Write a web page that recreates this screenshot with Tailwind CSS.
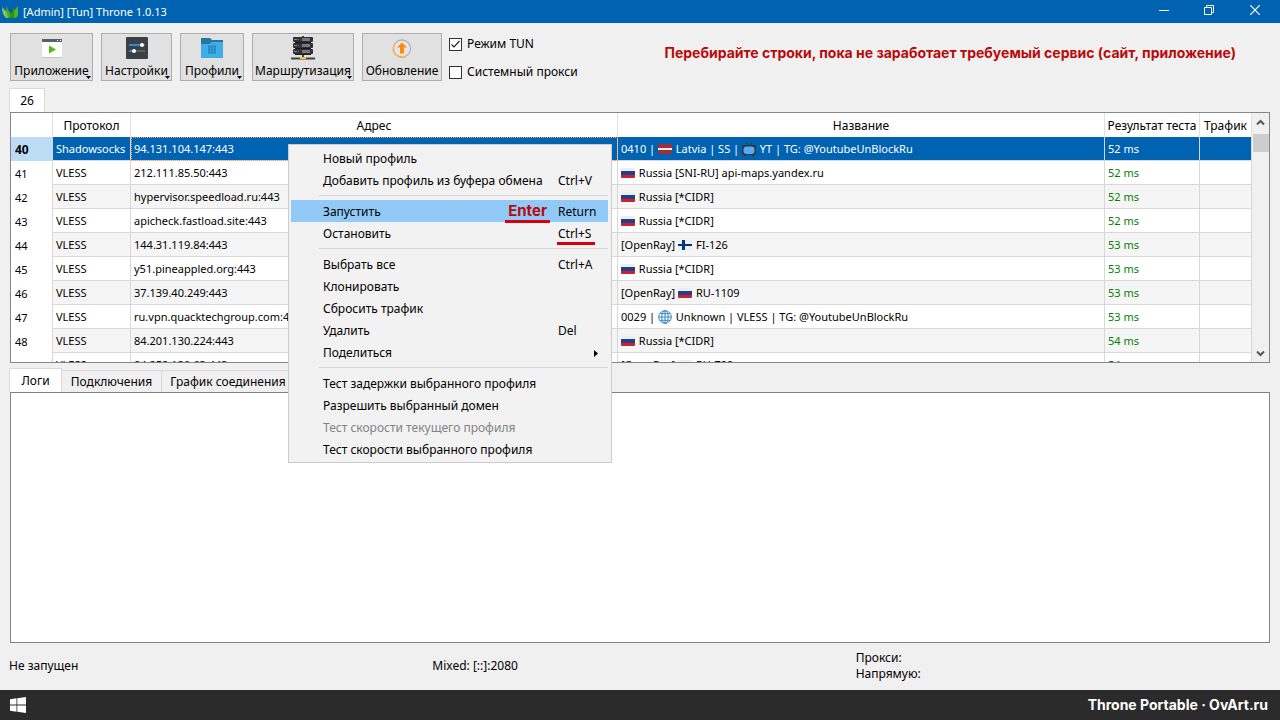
<!DOCTYPE html>
<html lang="ru">
<head>
  <meta charset="UTF-8" />
  <title>[Admin] [Tun] Throne 1.0.13</title>
  <script src="https://cdn.jsdelivr.net/npm/@tailwindcss/browser@4"></script>
</head>
<body class="relative flex h-screen flex-col overflow-hidden bg-[#f0f0f0] font-['Noto_Sans','Open_Sans',sans-serif] text-[12px] leading-4 text-black">

  <!-- Shared icons -->
  <svg class="hidden">
    <symbol id="ru" viewBox="0 0 14 10"><rect width="14" height="10" rx="1" fill="#eee" /><path d="M0 3h14v4H0z" fill="#22408c" /><path d="M0 7h14v2q0 1-1 1H1q-1 0-1-1z" fill="#ce2028" /></symbol>
    <symbol id="lv" viewBox="0 0 14 10"><rect width="14" height="10" rx="1" fill="#a02f3a" /><path d="M0 4h14v2H0z" fill="#eee" /></symbol>
    <symbol id="fi" viewBox="0 0 14 10"><rect width="14" height="10" rx="1" fill="#eee" /><path d="M0 4h4V0h3v4h7v2H7v4H4V6H0z" fill="#003580" /></symbol>
    <symbol id="tv" viewBox="0 0 14 14"><path d="M4 .5l3 3.500 3-3.500" fill="none" stroke="#31373d" /><rect y="3" width="14" height="10" rx="2" fill="#31373d" /><path d="M2 12h2v2H2zM10 12h2v2h-2z" fill="#31373d" /><rect x="1.500" y="4.500" width="11" height="7.500" rx="3" fill="#55acee" /></symbol>
    <symbol id="globe" viewBox="0 0 14 14"><g fill="none" stroke="#3b88c3"><circle cx="7" cy="7" r="6.300" /><ellipse cx="7" cy="7" rx="3.200" ry="6.300" /><path d="M7 .7v12.600M.7 7h12.600M1.700 3.700h10.600M1.700 10.300h10.600" /></g></symbol>
  </svg>

  <header class="flex h-[23px] shrink-0 items-center bg-[#0063b1] text-white">
    <svg class="ml-[2px] h-[12px] w-[16px]" viewBox="0 0 16 12">
      <path d="M0 1l5 5 2 6H4Q0 9 0 1z" fill="#83c25b" />
      <path d="M4 3V0l7 12H6z" fill="#4fa91f" />
      <path d="M7 12l3-6 2-5 3 11z" fill="#2f9400" />
      <path d="M12 5l4-5v9q-1 3-4 3z" fill="#57ad2f" />
    </svg>
    <h1 class="ml-[5px] flex-1 text-[11px]">[Admin] [Tun] Throne 1.0.13</h1>
    <button aria-label="Свернуть" class="flex w-[45px] justify-center pb-[3px]"><svg class="size-[10px]" viewBox="0 0 10 10"><path d="M0 5.500h10" stroke="#fff" /></svg></button>
    <button aria-label="Восстановить" class="flex w-[46px] justify-center pb-[3px]"><svg class="size-[10px]" viewBox="0 0 10 10" fill="none" stroke="#fff"><path d="M.5 2.500h7v7h-7zM2.500 2V.5h7v7H8" /></svg></button>
    <button aria-label="Закрыть" class="mr-[2px] flex w-[46px] justify-center pb-[3px]"><svg class="size-[10px]" viewBox="0 0 10 10"><path d="M0 0l10 10M10 0L0 10" stroke="#fff" stroke-width="1.200" /></svg></button>
  </header>

  <div class="flex shrink-0 items-start px-[10px] pt-[10px]">
    <div class="flex gap-2">
      <button class="relative flex h-[48px] w-[83px] flex-col items-center justify-between whitespace-nowrap border border-[#adadad] bg-[#e1e1e1] pt-[2px] pb-px">
        <svg class="h-6 w-6" viewBox="0 0 24 24"><path d="M2 3h20v18H2z" fill="#fff" /><path d="M2 3h20v3H2z" fill="#566069" /><path d="M17 4h1v1h-1zM20 4h1v1h-1z" fill="#fff" /><path d="M2 21.500h20" stroke="#c4c4c4" /><path d="M9 9.500l7 4-7 4z" fill="#57b910" /></svg>
        <span>Приложение</span>
        <svg class="absolute right-px bottom-px h-[3px] w-[5px]" viewBox="0 0 5 3"><path d="M0 0h5L2.500 3z" /></svg>
      </button>
      <button class="relative flex h-[48px] w-[71px] flex-col items-center justify-between whitespace-nowrap border border-[#adadad] bg-[#e1e1e1] pt-[2px] pb-px">
        <svg class="h-6 w-6" viewBox="0 0 24 24"><rect x="1" y="1" width="22" height="22" rx="1" fill="#3b4045" /><path d="M4 9h16M4 15h16" stroke="#5a6066" stroke-width="2" /><path d="M4 9h12M4 15h4" stroke="#3685d1" stroke-width="2" /><circle cx="17" cy="9" r="2" fill="#fff" /><circle cx="9" cy="15" r="2" fill="#fff" /></svg>
        <span>Настройки</span>
        <svg class="absolute right-px bottom-px h-[3px] w-[5px]" viewBox="0 0 5 3"><path d="M0 0h5L2.500 3z" /></svg>
      </button>
      <button class="relative flex h-[48px] w-[64px] flex-col items-center justify-between whitespace-nowrap border border-[#adadad] bg-[#e1e1e1] pt-[2px] pb-px">
        <svg class="h-6 w-6" viewBox="0 0 24 24"><path d="M1 2h9l2 2h11v7H1z" fill="#28769b" /><path d="M1 8h8l3-2h11v16H1z" fill="#3daee9" /><path d="M8 9.500h8v8H8z" fill="#2583b5" /><path d="M8 12.200h8M8 15h8M10.700 9.500v8M13.500 9.500v8" stroke="#3daee9" stroke-width=".6" /></svg>
        <span>Профили</span>
        <svg class="absolute right-px bottom-px h-[3px] w-[5px]" viewBox="0 0 5 3"><path d="M0 0h5L2.500 3z" /></svg>
      </button>
      <button class="relative flex h-[48px] w-[102px] flex-col items-center justify-between whitespace-nowrap border border-[#adadad] bg-[#e1e1e1] pt-[2px] pb-px">
        <svg class="h-6 w-6" viewBox="0 0 24 24"><path d="M12 0v22M0 22.500h24" stroke="#414141" stroke-width="2" /><g fill="#303038"><rect x="2" y="1" width="20" height="5" rx="1" /><rect x="2" y="7" width="20" height="5" rx="1" /><rect x="2" y="13" width="20" height="5" rx="1" /></g><path d="M11 3.500h8M11 9.500h8M11 15.500h8" stroke="#777783" stroke-width="3" /><path d="M3 3.500h3M3 9.500h3M3 15.500h3" stroke="#8a8a94" /><path d="M7 3h1v1H7zM7 9h1v1H7zM7 15h1v1H7z" fill="#d4475e" /><path d="M4 6.500h16M4 12.500h16M4 18.500h16" stroke="#17171b" /><path d="M9 21h6v2H9z" fill="#f5c52c" /></svg>
        <span>Маршрутизация</span>
        <svg class="absolute right-px bottom-px h-[3px] w-[5px]" viewBox="0 0 5 3"><path d="M0 0h5L2.500 3z" /></svg>
      </button>
      <button class="flex h-[48px] w-[80px] flex-col items-center justify-between whitespace-nowrap border border-[#adadad] bg-[#e1e1e1] pt-[2px] pb-px">
        <svg class="h-6 w-6" viewBox="0 0 24 24"><circle cx="12" cy="12.500" r="8.500" fill="#e5e5e8" stroke="#b4b4b4" stroke-width="1.300" /><path d="M4.500 8.500a8.500 8.500 0 0 0 11 12" fill="none" stroke="#f6b64e" stroke-width="1.400" /><path d="M12 6.500l5 5h-3v6h-4v-6H7z" fill="#ff8a0c" /></svg>
        <span>Обновление</span>
      </button>
    </div>

    <div class="ml-[7px] flex flex-col gap-3 pt-[3px]">
      <label class="flex items-center gap-[5px]">
        <span class="relative flex size-[13px]">
          <input type="checkbox" checked class="size-[13px] appearance-none border border-[#333] bg-white" />
          <svg class="pointer-events-none absolute top-0 left-0 size-[13px]" viewBox="0 0 13 13"><path d="M2.500 6.500l2.500 2.500 5.500-6" fill="none" stroke="#222" stroke-width="1.200" /></svg>
        </span>
        Режим TUN
      </label>
      <label class="flex items-center gap-[5px]">
        <input type="checkbox" class="size-[13px] appearance-none border border-[#333] bg-white" />
        Системный прокси
      </label>
    </div>

    <p class="ml-auto pt-2 pr-[34px] font-['Inter',sans-serif] text-[14px] leading-6 font-bold whitespace-nowrap text-[#b80a0a]">Перебирайте строки, пока не заработает требуемый сервис (сайт, приложение)</p>
  </div>

  <main class="flex min-h-0 flex-1 flex-col px-[10px] pt-[7px]">
    <div class="flex shrink-0">
      <button class="-ml-px h-6 w-9 border border-b-0 border-[#d9d9d9] bg-white">26</button>
    </div>

    <section class="flex min-h-0 flex-1 basis-0 overflow-hidden border border-[#828790] bg-white">
      <div class="min-w-0 flex-1 overflow-hidden">
        <table class="w-full table-fixed border-separate border-spacing-0 text-left whitespace-nowrap">
          <colgroup>
            <col class="w-[42px]" />
            <col class="w-[78px]" />
            <col />
            <col />
            <col class="w-[95px]" />
            <col class="w-[52px]" />
          </colgroup>
          <thead>
            <tr class="h-6 text-center">
              <th class="border-r border-[#e0e0e0] p-0"></th>
              <th class="border-r border-[#e0e0e0] px-0 pt-[2px] pb-0 font-normal">Протокол</th>
              <th class="border-r border-[#e0e0e0] px-0 pt-[2px] pb-0 font-normal">Адрес</th>
              <th class="border-r border-[#e0e0e0] px-0 pt-[2px] pb-0 font-normal">Название</th>
              <th class="border-r border-[#e0e0e0] px-0 pt-[2px] pb-0 font-normal">Результат теста</th>
              <th class="border-r border-[#e0e0e0] px-0 pt-[2px] pb-0 font-normal">Трафик</th>
            </tr>
          </thead>
          <tbody id="profiles"></tbody>
        </table>
      </div>
      <div class="flex w-[17px] shrink-0 flex-col items-center bg-[#f0f0f0]">
        <svg class="my-[6px] h-[7px] w-[9px] shrink-0" viewBox="0 0 9 7"><path d="M1 5.500L4.500 2 8 5.500" fill="none" stroke="#555" stroke-width="2" /></svg>
        <div class="mt-[2px] h-[18px] w-4 bg-[#cdcdcd]"></div>
        <svg class="mt-auto mb-[5px] h-[7px] w-[9px] shrink-0" viewBox="0 0 9 7"><path d="M1 1.500L4.500 5 8 1.500" fill="none" stroke="#555" stroke-width="2" /></svg>
      </div>
    </section>

    <div class="-ml-px flex shrink-0 items-end pt-[5px]">
      <button class="h-6 w-[53px] border border-b-0 border-[#d9d9d9] bg-white">Логи</button>
      <button class="h-[22px] w-[100px] border-t border-r border-[#d9d9d9]">Подключения</button>
      <button class="h-[22px] w-[133px] border-t border-r border-[#d9d9d9]">График соединения</button>
    </div>
    <textarea aria-label="Логи" readonly class="min-h-0 flex-1 basis-0 resize-none border border-[#828282] bg-white"></textarea>
  </main>

  <footer class="grid h-[47px] shrink-0 grid-cols-3 items-center gap-1 pr-[5px] pb-[2px] pl-[9px]">
    <span>Не запущен</span>
    <span>Mixed: [::]:2080</span>
    <div>
      <p>Прокси:</p>
      <p>Напрямую:</p>
    </div>
  </footer>

  <div class="flex h-[30px] shrink-0 items-center justify-between bg-[#2b2b2b] pr-3 pb-px pl-[10px] text-white">
    <button aria-label="Пуск"><svg class="size-4" viewBox="0 0 16 16" fill="#fff"><path d="M0 2.200L6.500 1.300V7.500H0zM7.300 1.200L16 0v7.500H7.300zM0 8.400h6.500v6.300L0 13.800zM7.300 8.400H16V16l-8.700-1.200z" /></svg></button>
    <span class="font-['Inter',sans-serif] text-[14px] font-bold">Throne Portable · OvArt.ru</span>
  </div>

  <!-- Context menu -->
  <div id="menu" role="menu" class="absolute top-[144px] left-[288px] w-[324px] border border-[#ccc] bg-[#f2f2f2] p-[2px] pr-[3px]"></div>

  <script>
    const flag = (id) => `<svg class="mr-px inline-block h-[10px] w-[14px] align-[-1px]"><use href="#${id}" /></svg>`;
    const icon = (id) => `<svg class="mr-px inline-block size-[14px] align-[-3px]"><use href="#${id}" /></svg>`;

    const profiles = [
      ["40", "Shadowsocks", "94.131.104.147:443", `0410 | ${flag("lv")} Latvia | SS | ${icon("tv")} YT | TG: @YoutubeUnBlockRu`, "52 ms"],
      ["41", "VLESS", "212.111.85.50:443", `${flag("ru")} Russia [SNI-RU] api-maps.yandex.ru`, "52 ms"],
      ["42", "VLESS", "hypervisor.speedload.ru:443", `${flag("ru")} Russia [*CIDR]`, "52 ms"],
      ["43", "VLESS", "apicheck.fastload.site:443", `${flag("ru")} Russia [*CIDR]`, "52 ms"],
      ["44", "VLESS", "144.31.119.84:443", `[OpenRay] ${flag("fi")} FI-126`, "53 ms"],
      ["45", "VLESS", "y51.pineappled.org:443", `${flag("ru")} Russia [*CIDR]`, "53 ms"],
      ["46", "VLESS", "37.139.40.249:443", `[OpenRay] ${flag("ru")} RU-1109`, "53 ms"],
      ["47", "VLESS", "ru.vpn.quacktechgroup.com:443", `0029 | ${icon("globe")} Unknown | VLESS | TG: @YoutubeUnBlockRu`, "53 ms"],
      ["48", "VLESS", "84.201.130.224:443", `${flag("ru")} Russia [*CIDR]`, "54 ms"],
      ["49", "VLESS", "84.252.130.63:443", `[OpenRay] ${flag("ru")} RU-722`, "54 ms"],
    ];

    const cell = "h-6 overflow-hidden border-r border-b border-[#d8d8d8] py-0 pr-0 pl-[3px] text-[11px]";
    document.getElementById("profiles").innerHTML = profiles.map(([num, protocol, address, name, ping], i) => {
      const active = i === 0;
      const row = active ? "bg-[#0063b1] text-white" : i % 2 ? "bg-white" : "bg-[#f5f5f5]";
      return `
        <tr class="${row}">
          <th class="h-6 border-r border-[#d8d8d8] pt-[2px] pr-0 pb-0 pl-1 text-black ${active ? "bg-[#bcdcf4] font-bold" : "bg-white text-[11px] font-normal"}">${num}</th>
          <td class="${cell}">${protocol}</td>
          <td class="${cell} ${active ? "outline-1 -outline-offset-1 outline-dotted outline-[#ff9c4e]" : ""}">${address}</td>
          <td class="${cell}">${name}</td>
          <td class="${cell} ${active ? "" : "text-[#008000]"}">${ping}</td>
          <td class="${cell}"></td>
        </tr>`;
    }).join("");

    const items = [
      { text: "Новый профиль" },
      { text: "Добавить профиль из буфера обмена", key: "Ctrl+V" },
      null,
      { text: "Запустить", key: "Return", active: true, note: true },
      { text: "Остановить", key: "Ctrl+S", underline: true },
      null,
      { text: "Выбрать все", key: "Ctrl+A" },
      { text: "Клонировать" },
      { text: "Сбросить трафик" },
      { text: "Удалить", key: "Del" },
      { text: "Поделиться", sub: true },
      null,
      { text: "Тест задержки выбранного профиля" },
      { text: "Разрешить выбранный домен" },
      { text: "Тест скорости текущего профиля", disabled: true },
      { text: "Тест скорости выбранного профиля" },
    ];

    document.getElementById("menu").innerHTML = items.map((item) => {
      if (!item) return `<div class="ml-7 flex h-[9px] items-center"><div class="h-px w-full bg-[#d5d5d5]"></div></div>`;
      return `
        <button role="menuitem" ${item.disabled ? "disabled" : ""} class="relative flex h-[22px] w-full items-center pt-[2px] pl-8 text-left whitespace-nowrap ${item.active ? "bg-[#91c9f7]" : ""} ${item.disabled ? "text-[#838383]" : ""}">
          <span class="flex-1">${item.text}</span>
          ${item.note ? `<span class="absolute top-0 right-[58px] h-[23px] border-b-3 border-[#d9000d] px-[3px] font-['Inter',sans-serif] text-[15px] leading-[22px] font-bold text-[#b80a0a]">Enter</span>` : ""}
          <span class="w-[50px]">${item.key || ""}</span>
          ${item.underline ? `<span class="absolute right-[13px] -bottom-px h-[3px] w-[38px] bg-[#d9000d]"></span>` : ""}
          ${item.sub ? `<svg class="absolute right-[10px] h-[7px] w-[4px]" viewBox="0 0 4 7"><path d="M0 0v7l4-3.500z" /></svg>` : ""}
        </button>`;
    }).join("");
  </script>

</body>
</html>
